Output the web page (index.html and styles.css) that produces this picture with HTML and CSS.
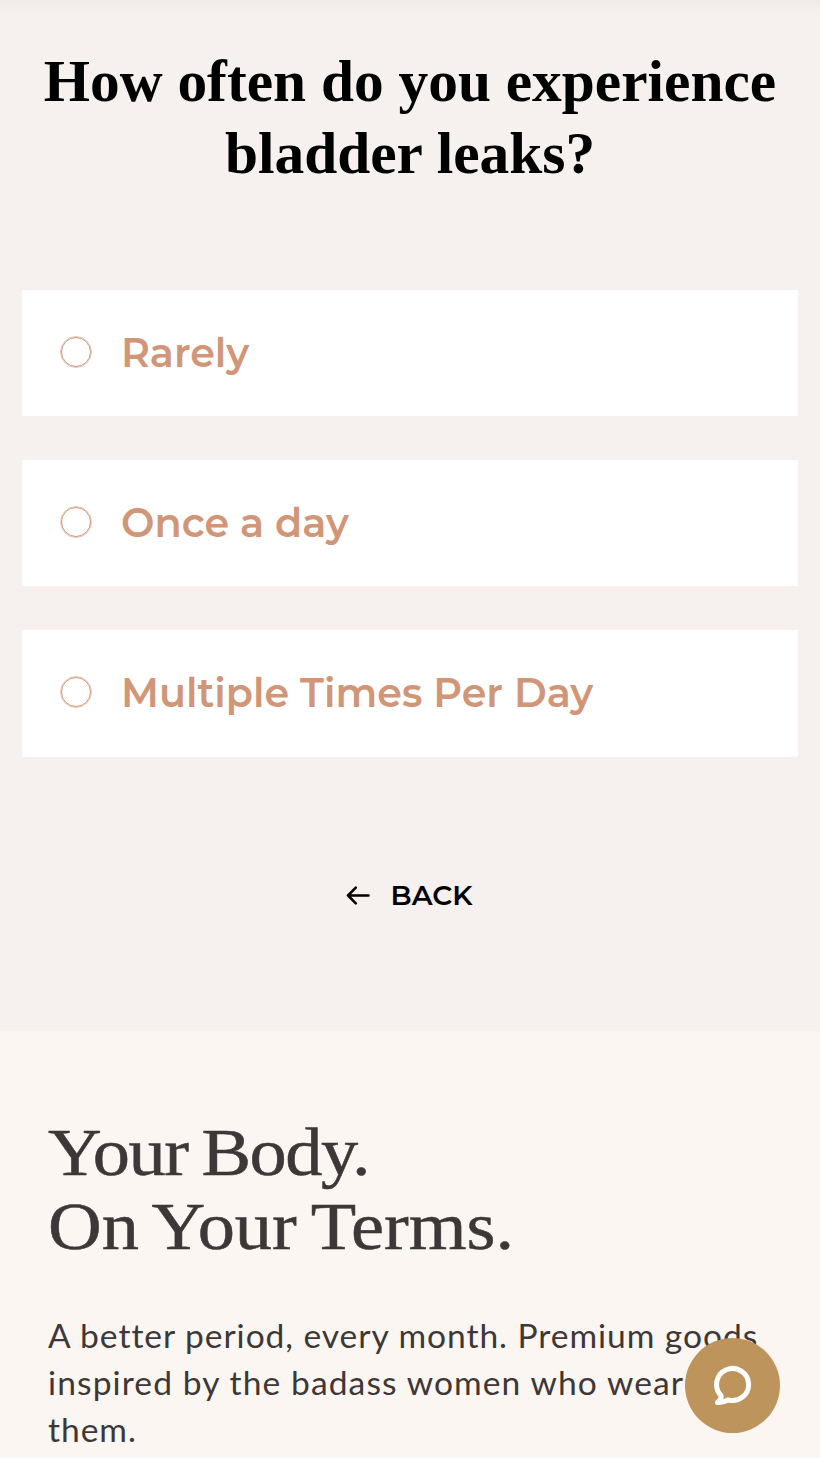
FILE: index.html
```html
<!DOCTYPE html>
<html lang="en">
<head>
<meta charset="utf-8">
<title>Bladder leaks quiz</title>
<link rel="stylesheet" href="styles.css">
</head>
<body>
<main class="quiz">
  <h1 class="question">How often do you experience<br>bladder leaks?</h1>
  <div class="options">
    <div class="option"><span class="radio"></span><span class="label">Rarely</span></div>
    <div class="option"><span class="radio"></span><span class="label">Once a day</span></div>
    <div class="option"><span class="radio"></span><span class="label">Multiple Times Per Day</span></div>
  </div>
  <div class="back">
    <svg class="arrow" width="24" height="20" viewBox="0 0 24 20"><path d="M22.500 10.500H2M9.800 2.700L2 10.500l7.800 7.800" fill="none" stroke="#000" stroke-width="2.500" stroke-linecap="round" stroke-linejoin="round"/></svg>
    <span class="back-text">BACK</span>
  </div>
</main>
<footer class="footer">
  <h2 class="tagline"><span class="tight">Your Body.</span><br>On Your Terms.</h2>
  <p class="copy">A better period, every month. Premium goods<br><span class="loose">inspired by the badass women who wear</span><br>them.</p>
</footer>
<div class="chat">
  <svg width="40" height="42" viewBox="0 0 40 42"><path d="M8 30.500A16 16 0 1 1 15 34.800Q10 38 4.500 37.500Q9 34 8 30.500Z" fill="none" stroke="#fff" stroke-width="5" stroke-linejoin="round"/></svg>
</div>
</body>
</html>
```
FILE: styles.css
```css
* { box-sizing: border-box; }
body { margin: 0; width: 820px; height: 1458px; overflow: hidden; background: #fbf6f2; }
h1, h2, p { margin: 0; white-space: nowrap; }
.quiz { height: 1031px; padding: 45px 22px 0; background: linear-gradient(#efe9e7, #f6f0ee 14px); }
.question { font: bold 59.4px/72px "Liberation Serif", serif; text-align: center; color: #000; }
.options { display: grid; gap: 43.9px; margin-top: 100.7px; }
.option { height: 126.4px; background: #fff; display: flex; align-items: center; padding-left: 39px; }
.radio { width: 30px; height: 30px; border: 1.5px solid #d19677; outline: 0.4px solid #d1967780; border-radius: 50%; margin: 0 30px 2px 0; }
.label { font: 600 39.7px/50px Montserrat, Inter, sans-serif; color: #d19677; }
.back { display: flex; align-items: center; justify-content: center; gap: 21px; margin: 118.500px 2px 0 0; height: 40px; }
.back-text { font: 600 27.8px/40px Montserrat, Inter, sans-serif; }
.footer { padding: 84px 48px 0; color: #3d3837; }
.tagline { font: 400 67px/74px "Liberation Serif", serif; letter-spacing: 0; word-spacing: -3px; transform: scaleX(1.11); transform-origin: 0 0; -webkit-text-stroke: 0.5px #3d3837; }
.tight { letter-spacing: -1.3px; }
.copy { font: 400 33.6px/47px Lato, sans-serif; margin-top: 49px; letter-spacing: 0.95px; font-variant-ligatures: none; }
.loose { letter-spacing: 1.1px; }
.chat { position: absolute; left: 685px; top: 1338px; width: 95px; height: 95px; border-radius: 50%; background: #bd945c; display: flex; align-items: center; justify-content: center; }
```
